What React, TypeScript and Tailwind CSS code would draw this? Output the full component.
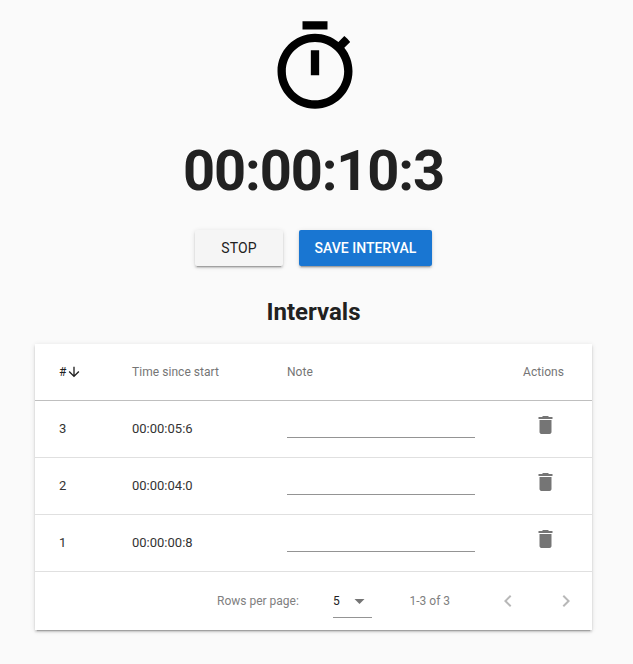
const intervals = [
  { id: 3, time: '00:00:05:6' },
  { id: 2, time: '00:00:04:0' },
  { id: 1, time: '00:00:00:8' },
];

function Icon({ d, className }: { d: string; className: string }) {
  return (
    <svg viewBox="0 0 24 24" fill="currentColor" className={`block shrink-0 ${className}`}>
      <path d={d} />
    </svg>
  );
}

const TIMER =
  'M15 1H9v2h6V1zm-4 13h2V8h-2v6zm8.03-6.61l1.42-1.42c-.43-.51-.9-.99-1.41-1.41l-1.42 1.42C16.07 4.74 14.12 4 12 4c-4.97 0-9 4.03-9 9s4.02 9 9 9 9-4.03 9-9c0-2.12-.74-4.07-1.97-5.61zM12 20c-3.87 0-7-3.13-7-7s3.13-7 7-7 7 3.13 7 7-3.13 7-7 7z';
const ARROW_DOWN = 'M20 12l-1.41-1.41L13 16.17V4h-2v12.17l-5.58-5.59L4 12l8 8 8-8z';
const DELETE = 'M6 19c0 1.1.9 2 2 2h8c1.1 0 2-.9 2-2V7H6v12zM19 4h-3.5l-1-1h-5l-1 1H5v2h14V4z';
const DROPDOWN = 'M7 10l5 5 5-5z';
const CHEVRON_LEFT = 'M15.41 7.41L14 6l-6 6 6 6 1.41-1.41L10.83 12z';
const CHEVRON_RIGHT = 'M10 6L8.59 7.41 13.17 12l-4.58 4.59L10 18l6-6z';

const GRID = 'grid grid-cols-[73px_155px_236px_1fr] items-center pl-6';

export default function App() {
  return (
    <div className="flex h-[664px] w-[633px] flex-col bg-[#fafafa] pl-[35px] font-['Roboto',sans-serif] text-[#212121]">
      <div className="flex w-[557px] flex-col items-center">
        <Icon d={TIMER} className="mt-[17px] ml-[3px] size-[100px] text-black" />
        <h1 className="mt-[26px] text-[56px] leading-[56px] font-bold tracking-[-0.02em]">00:00:10:3</h1>
        <div className="mt-[31px] flex gap-4">
          <button className="h-9 w-[88px] rounded-[2px] bg-[#f5f5f5] text-sm font-normal tracking-[0.01em] shadow-[0_3px_1px_-2px_rgba(0,0,0,.2),0_2px_2px_0_rgba(0,0,0,.14),0_1px_5px_0_rgba(0,0,0,.12)]">
            STOP
          </button>
          <button className="h-9 w-[133px] rounded-[2px] bg-[#1976d2] text-sm font-medium text-white shadow-[0_3px_1px_-2px_rgba(0,0,0,.2),0_2px_2px_0_rgba(0,0,0,.14),0_1px_5px_0_rgba(0,0,0,.12)]">
            SAVE INTERVAL
          </button>
        </div>
        <h2 className="mt-[30px] text-2xl leading-8 font-bold">Intervals</h2>
      </div>

      <div className="mt-4 w-[557px] bg-white shadow-[0_3px_1px_-2px_rgba(0,0,0,.2),0_2px_2px_0_rgba(0,0,0,.14),0_1px_5px_0_rgba(0,0,0,.12)]">
        <div className={`${GRID} h-[57px] border-b border-[#bfbfbf] text-xs font-normal tracking-[0.004em] text-[#757575]`}>
          <div className="flex items-center text-[#212121]">
            #<Icon d={ARROW_DOWN} className="-ml-[0.5px] size-4" />
          </div>
          <div>Time since start</div>
          <div>Note</div>
          <div>Actions</div>
        </div>
        {intervals.map((row) => (
          <div key={row.id} className={`${GRID} h-[57px] border-b border-[#e0e0e0] text-[13px] text-[#333]`}>
            <div>{row.id}</div>
            <div>{row.time}</div>
            <input className="-mt-[11px] h-7 w-[188px] border-b border-[#949494] outline-none" />
            <Icon d={DELETE} className="-mt-2 ml-[10px] size-6 translate-x-[0.5px] text-[#757575]" />
          </div>
        ))}
        <div className="flex h-[58px] items-center text-xs text-[#808080]">
          <span className="ml-[182px] w-[116px]">Rows per page:</span>
          <div className="flex h-[34px] w-[39px] items-center justify-between border-b border-[#949494] text-[#212121]">
            5
            <Icon d={DROPDOWN} className="size-6 -translate-x-[0.5px] text-[#757575]" />
          </div>
          <span className="ml-[37.5px] w-[86.5px]">1-3 of 3</span>
          <Icon d={CHEVRON_LEFT} className="size-6 text-[#b8b8b8]" />
          <Icon d={CHEVRON_RIGHT} className="ml-[34px] size-6 text-[#b8b8b8]" />
        </div>
      </div>
    </div>
  );
}
